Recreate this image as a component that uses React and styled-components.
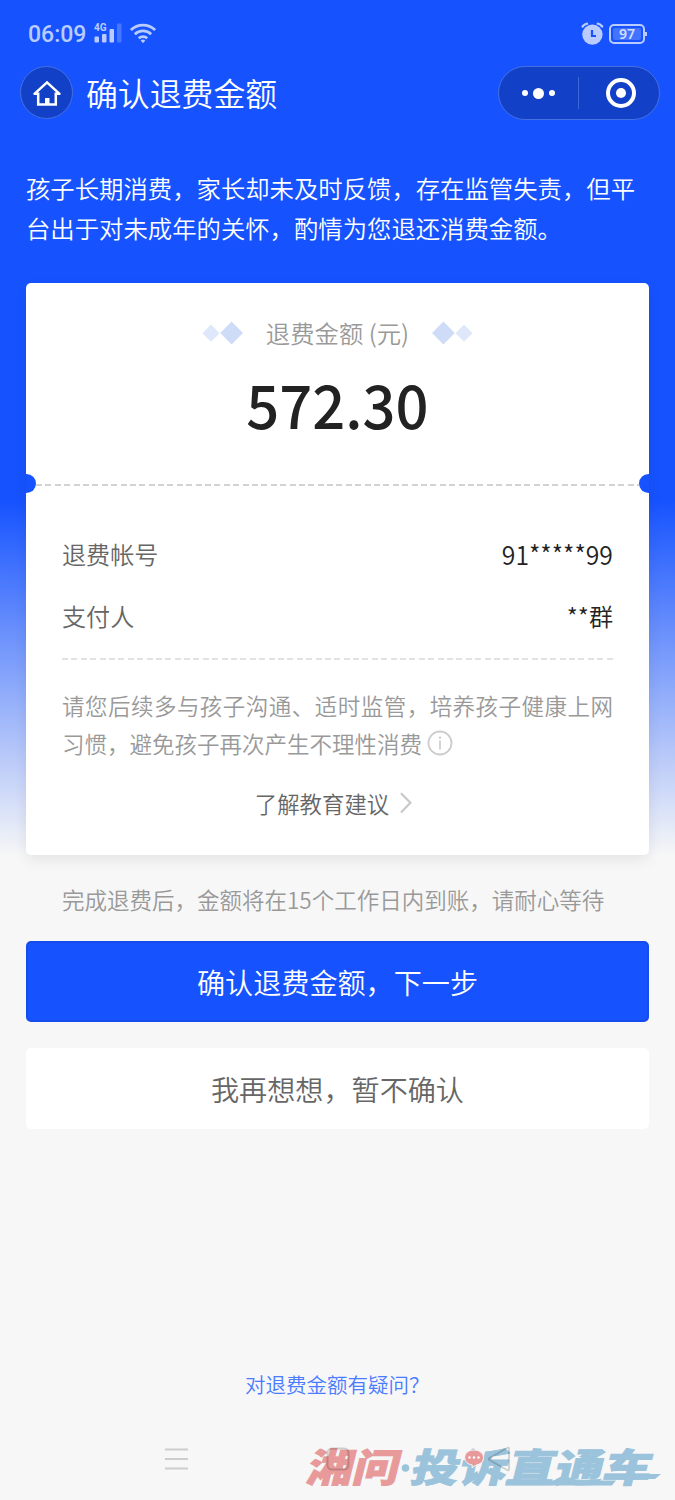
import React from "react";
import styled, { createGlobalStyle } from "styled-components";

const BLUE = "#1653ff";
const DARK_BLUE = "#1241c8";
const PALE = "#b9cbff";
const BG = "#f7f7f7";
const LOGO_RED = "#e79a99";
const LOGO_BLUE = "#9bc3db";
const NAV_GREY = "rgba(0, 0, 0, 0.17)";

const App = () => {
  return (
    <>
      <GlobalStyle />
      <Page>
        <StatusBar>
          <StatusGroup>
            <Time>06:09</Time>
            <SignalIcon />
            <WifiIcon />
          </StatusGroup>
          <StatusGroup>
            <AlarmIcon />
            <Battery>
              <BatteryLevel>97</BatteryLevel>
            </Battery>
          </StatusGroup>
        </StatusBar>

        <NavBar>
          <HomeBtn>
            <HomeIcon />
          </HomeBtn>
          <NavTitle>确认退费金额</NavTitle>
          <Capsule>
            <CapsuleSide>
              <Dot $size={6} />
              <Dot $size={11} />
              <Dot $size={6} />
            </CapsuleSide>
            <CapsuleLine />
            <CapsuleSide $shift={4}>
              <Ring>
                <Dot $size={10} />
              </Ring>
            </CapsuleSide>
          </Capsule>
        </NavBar>

        <Intro>
          孩子长期消费，家长却未及时反馈，存在监管失责，但平台出于对未成年的关怀，酌情为您退还消费金额。
        </Intro>

        <Card>
          <AmountBox>
            <AmountHead>
              <Diamonds />
              <AmountLabel>退费金额 (元)</AmountLabel>
              <Diamonds $flip />
            </AmountHead>
            <Amount>572.30</Amount>
          </AmountBox>
          <Perforation>
            <Notch $side="left" />
            <Dashes $color="#d2d2d2" />
            <Notch $side="right" />
          </Perforation>
          <Details>
            <Row>
              <RowLabel>退费帐号</RowLabel>
              <RowValue $digits>91*****99</RowValue>
            </Row>
            <Row>
              <RowLabel>支付人</RowLabel>
              <RowValue>**群</RowValue>
            </Row>
            <DetailsLine $color="#e2e2e2" />
            <Advice>
              请您后续多与孩子沟通、适时监管，培养孩子健康上网习惯，避免孩子再次产生不理性消费
              <InfoIcon />
            </Advice>
            <MoreLink>
              了解教育建议
              <ChevronIcon />
            </MoreLink>
          </Details>
        </Card>

        <Hint>完成退费后，金额将在15个工作日内到账，请耐心等待</Hint>
        <Button $primary>确认退费金额，下一步</Button>
        <Button>我再想想，暂不确认</Button>

        <Question>对退费金额有疑问？</Question>
        <Watermark />
        <SystemNav>
          <MenuIcon />
          <SquareIcon />
          <BackIcon />
        </SystemNav>
      </Page>
    </>
  );
};

export default App;

const SignalIcon = () => (
  <SignalSvg width="29" height="21" viewBox="0 0 29 21">
    <text x="0" y="8.2" fontSize="10" fontWeight="700" fill={PALE}>
      4G
    </text>
    <rect x="0.5" y="13.5" width="4.5" height="6" rx="1" fill={PALE} />
    <rect x="8" y="11" width="4.5" height="8.5" rx="1" fill={PALE} />
    <rect x="15.5" y="6" width="4.5" height="13.5" rx="1" fill={PALE} />
    <rect x="23" y="0.5" width="4.5" height="19" rx="1" fill="#4777ff" />
  </SignalSvg>
);

const WifiIcon = () => (
  <svg
    width="26"
    height="21"
    viewBox="0 0 26 21"
    fill="none"
    stroke={PALE}
    strokeWidth="2.7"
  >
    <path d="M0.9 7.1a17.4 17.4 0 0 1 24.2 0" />
    <path d="M4.8 11.2a11.8 11.8 0 0 1 16.4 0" />
    <path d="M8.8 15.3a6 6 0 0 1 8.4 0" />
    <path d="M10.7 17.6a3.3 3.3 0 0 1 4.6 0L13 20.3z" fill={PALE} stroke="none" />
  </svg>
);

const AlarmIcon = () => (
  <svg width="24" height="24" viewBox="0 0 24 24" fill="none">
    <circle cx="12.4" cy="12.6" r="10.2" fill={PALE} />
    <path
      d="M2.6 4.4Q4.200 2.400 7 1.700M22.200 4.400Q20.600 2.400 17.800 1.700"
      stroke={PALE}
      strokeWidth="2.4"
      strokeLinecap="round"
    />
    <path d="M12 8v6h4" stroke={BLUE} strokeWidth="2.2" />
  </svg>
);

const HomeIcon = () => (
  <svg
    width="28"
    height="28"
    viewBox="0 0 28 28"
    fill="none"
    stroke="#fff"
    strokeWidth="2.5"
  >
    <path d="M1.2 15.2L14 3.4l12.8 11.8M5.2 13.6v12h17.6v-12" />
    <path d="M12 19h4.5v6.5H12z" fill="#fff" stroke="none" />
    <path d="M0.6 15h4.6M22.8 15h4.6" strokeWidth="2" />
  </svg>
);

const Diamonds = ({ $flip }) => (
  <DiamondSvg $flip={$flip} width="42" height="24" viewBox="0 0 42 24">
    <path d="M9 3.6l8.6 8.6L9 20.8.4 12.2z" fill="#dfe8fa" />
    <path d="M29.6.6L41 12 29.6 23.4 18.2 12z" fill="#cedcf7" />
  </DiamondSvg>
);

const InfoIcon = () => (
  <InfoSvg width="26" height="26" viewBox="0 0 26 26" fill="none" stroke="#ccc">
    <circle cx="13" cy="13" r="11.5" strokeWidth="1.8" />
    <path d="M13 10.5v9" strokeWidth="1.7" />
    <circle cx="13" cy="7.6" r="1.2" fill="#ccc" stroke="none" />
  </InfoSvg>
);

const ChevronIcon = () => (
  <svg width="14" height="24" viewBox="0 0 14 24" fill="none">
    <path d="M2 2.2l9.4 9.600L2 21.400" stroke="#c8c8c8" strokeWidth="2.2" />
  </svg>
);

const MenuIcon = () => (
  <svg width="24" height="24" viewBox="0 0 24 24" stroke={NAV_GREY}>
    <path d="M1 2.500h23M1 12h23M1 21.500h23" strokeWidth="2" />
  </svg>
);

const SquareIcon = () => (
  <svg width="24" height="24" viewBox="0 0 24 24" fill="none">
    <rect
      x="1.5"
      y="1.5"
      width="21"
      height="21"
      rx="4.5"
      stroke={NAV_GREY}
      strokeWidth="2"
    />
  </svg>
);

const BackIcon = () => (
  <svg width="24" height="26" viewBox="0 0 24 26" fill="none">
    <path
      d="M20.5 1.8L2.5 12q-1.6 1 0 2l18 10.2q1.5.5 1.5-1V2.8q0-1.5-1.5-1z"
      stroke={NAV_GREY}
      strokeWidth="1.8"
    />
  </svg>
);

// site logo laid over the bottom of the screen
const Watermark = () => (
  <WatermarkSvg width="375" height="64" viewBox="0 0 375 64">
    <g fontWeight="900" fontSize="39" strokeWidth="0.9">
      <g transform="translate(5 46.500) skewX(-14)">
        <text
          textLength="92"
          lengthAdjust="spacingAndGlyphs"
          fill={LOGO_RED}
          stroke={LOGO_RED}
        >
          湘问
        </text>
      </g>
      <g transform="translate(109 46.500) skewX(-14)">
        <text
          textLength="240"
          lengthAdjust="spacingAndGlyphs"
          fill={LOGO_BLUE}
          stroke={LOGO_BLUE}
        >
          投诉直通车
        </text>
      </g>
    </g>
    <circle cx="105.5" cy="33" r="3.8" fill={LOGO_BLUE} />
    <path d="M206 45.5h110l-4 5H205z" fill={LOGO_BLUE} />
    <path d="M312 39h49l-6 5h-45z" fill={LOGO_BLUE} />
    <path
      d="M174 15c5.5 0 9.5 3.2 9.5 7.5 0 4-3 6.8-7.2 7.5l-4.3 2.8.4-2.8c-4.4-.5-7.7-3.5-7.7-7.5 0-4.3 3.8-7.5 9.3-7.5z"
      fill={LOGO_RED}
      stroke={BG}
      strokeWidth="1"
    />
    <g fill="#fff">
      <circle cx="169.5" cy="22.5" r="1.2" />
      <circle cx="174" cy="22.5" r="1.2" />
      <circle cx="178.5" cy="22.5" r="1.2" />
    </g>
  </WatermarkSvg>
);

const GlobalStyle = createGlobalStyle`
  * {
    box-sizing: border-box;
  }
  body {
    margin: 0;
    background: ${BG};
    font-family: "Noto Sans CJK SC", sans-serif;
    font-weight: 350;
  }
  svg {
    display: block;
    flex-shrink: 0;
  }
`;

const Page = styled.div`
  position: relative;
  width: 675px;
  height: 1500px;
  overflow: hidden;
  padding: 0 26px;
  display: flex;
  flex-direction: column;
  background: linear-gradient(
    ${BLUE} 0,
    ${BLUE} 500px,
    ${BG} 856px,
    ${BG} 100%
  );
`;

const StatusBar = styled.div`
  height: 66px;
  padding: 1px 2px 0;
  display: flex;
  align-items: center;
  justify-content: space-between;
`;

const StatusGroup = styled.div`
  display: flex;
  align-items: center;
  gap: 5px;
`;

const Time = styled.span`
  font-family: Roboto, sans-serif;
  font-size: 23px;
  line-height: 28px;
  font-weight: 500;
  color: ${PALE};
  margin: 3px 3px 0 0;
`;

const SignalSvg = styled.svg`
  font-family: Roboto, sans-serif;
  margin-right: 2px;
`;

const Battery = styled.div`
  position: relative;
  width: 36px;
  height: 20px;
  margin-right: 2px;
  padding: 2px;
  border: 2px solid ${PALE};
  border-radius: 5px;
  &::after {
    content: "";
    position: absolute;
    right: -4px;
    top: 6px;
    width: 2px;
    height: 4px;
    background: ${PALE};
  }
`;

const BatteryLevel = styled.div`
  height: 12px;
  border-radius: 2px;
  background: #4374ff;
  color: #d3deff;
  font-family: "Noto Sans", sans-serif;
  font-size: 14px;
  line-height: 12px;
  font-weight: 600;
  text-align: center;
`;

const NavBar = styled.div`
  height: 54px;
  margin: 0 -11px 0 -6px;
  display: flex;
  align-items: center;
`;

const HomeBtn = styled.div`
  width: 53px;
  height: 53px;
  margin-bottom: 1px;
  border-radius: 50%;
  border: 1px solid #4570e2;
  background: ${DARK_BLUE};
  display: flex;
  align-items: center;
  justify-content: center;
`;

const NavTitle = styled.h1`
  margin: -2px auto 0 13px;
  font-size: 31.875px;
  line-height: 48px;
  font-weight: 350;
  color: #fff;
`;

const Capsule = styled.div`
  width: 162px;
  height: 54px;
  border-radius: 27px;
  border: 1px solid #4570e2;
  background: ${DARK_BLUE};
  display: flex;
  align-items: center;
`;

const CapsuleSide = styled.div`
  flex: 1 1 0;
  min-width: 79px;
  padding-left: ${({ $shift = 0 }) => $shift}px;
  display: flex;
  align-items: center;
  justify-content: center;
  gap: 5px;
`;

const CapsuleLine = styled.div`
  width: 1px;
  height: 32px;
  background: #3d66d6;
`;

const Dot = styled.span`
  width: ${({ $size }) => $size}px;
  height: ${({ $size }) => $size}px;
  border-radius: 50%;
  background: #fff;
`;

const Ring = styled.div`
  width: 30px;
  height: 30px;
  border: 4px solid #fff;
  border-radius: 50%;
  display: flex;
  align-items: center;
  justify-content: center;
`;

const Intro = styled.p`
  margin: 48px 0 0;
  height: 115px;
  font-size: 24.375px;
  line-height: 40px;
  color: #fff;
`;

const Card = styled.div`
  height: 572px;
  background: #fff;
  border-radius: 5px;
  box-shadow: 0 5px 14px rgba(0, 0, 0, 0.08);
`;

const AmountBox = styled.div`
  height: 191px;
  padding-top: 32px;
  display: flex;
  flex-direction: column;
  align-items: center;
`;

const AmountHead = styled.div`
  display: flex;
  align-items: center;
  gap: 22px;
`;

const DiamondSvg = styled.svg`
  transform: ${({ $flip }) => ($flip ? "scaleX(-1)" : "none")};
`;

const AmountLabel = styled.span`
  font-size: 24.375px;
  line-height: 36px;
  color: #999;
`;

const Amount = styled.div`
  margin-top: 8px;
  font-size: 60px;
  line-height: 88px;
  font-weight: 500;
  color: #222;
  transform: scaleX(0.965);
`;

const Perforation = styled.div`
  height: 20px;
  overflow: hidden;
  display: flex;
  align-items: flex-start;
`;

const Notch = styled.div`
  width: 10px;
  height: 19px;
  background: ${BLUE};
  border-radius: ${({ $side }) =>
    $side === "left" ? "0 10px 10px 0" : "10px 0 0 10px"};
`;

const Dashes = styled.div`
  flex: 1 0 auto;
  height: 2px;
  margin-top: 10px;
  background: repeating-linear-gradient(
    90deg,
    ${({ $color }) => $color} 0 6px,
    transparent 6px 9.39px
  );
`;

const DetailsLine = styled(Dashes)`
  margin-top: 12px;
`;

const Details = styled.div`
  padding: 28px 36px 0;
`;

const Row = styled.div`
  height: 62px;
  display: flex;
  align-items: center;
  justify-content: space-between;
  font-size: 24.1px;
`;

const RowLabel = styled.span`
  color: #666;
`;

const RowValue = styled.span`
  color: #222;
  font-size: ${({ $digits }) => ($digits ? "26px" : "inherit")};
  transform: ${({ $digits }) => ($digits ? "scaleX(0.95)" : "none")};
  transform-origin: right;
`;

const Advice = styled.p`
  margin: 27px 0 0;
  font-size: 22.5px;
  line-height: 37.5px;
  text-align: justify;
  color: #999;
`;

const InfoSvg = styled.svg`
  display: inline-block;
  vertical-align: -3px;
  margin-left: 5px;
`;

const MoreLink = styled.div`
  margin: 24px 7px 0 0;
  display: flex;
  align-items: center;
  justify-content: center;
  gap: 10px;
  font-size: 22.4px;
  line-height: 34px;
  color: #666;
`;

const Hint = styled.p`
  margin: 27px 36px 25px;
  font-size: 22.5px;
  line-height: 34px;
  color: #999;
  white-space: nowrap;
`;

const Button = styled.button`
  height: 81px;
  margin: 0 0 26px;
  padding: 0;
  border-radius: 5px;
  border: ${({ $primary }) => ($primary ? "2px solid #154cee" : "none")};
  background: ${({ $primary }) => ($primary ? BLUE : "#fff")};
  color: ${({ $primary }) => ($primary ? "#fff" : "#666")};
  font-family: inherit;
  font-weight: inherit;
  font-size: 28.125px;
  line-height: 40px;
`;

const Question = styled.a`
  margin: 214px 0 0 219px;
  font-size: 20.5px;
  line-height: 30px;
  color: #4b7bff;
`;

const SystemNav = styled.div`
  position: relative;
  margin-top: 47px;
  padding: 0 138px;
  display: flex;
  align-items: center;
  justify-content: space-between;
`;

const WatermarkSvg = styled.svg`
  position: absolute;
  left: 300px;
  top: 1435px;
`;
